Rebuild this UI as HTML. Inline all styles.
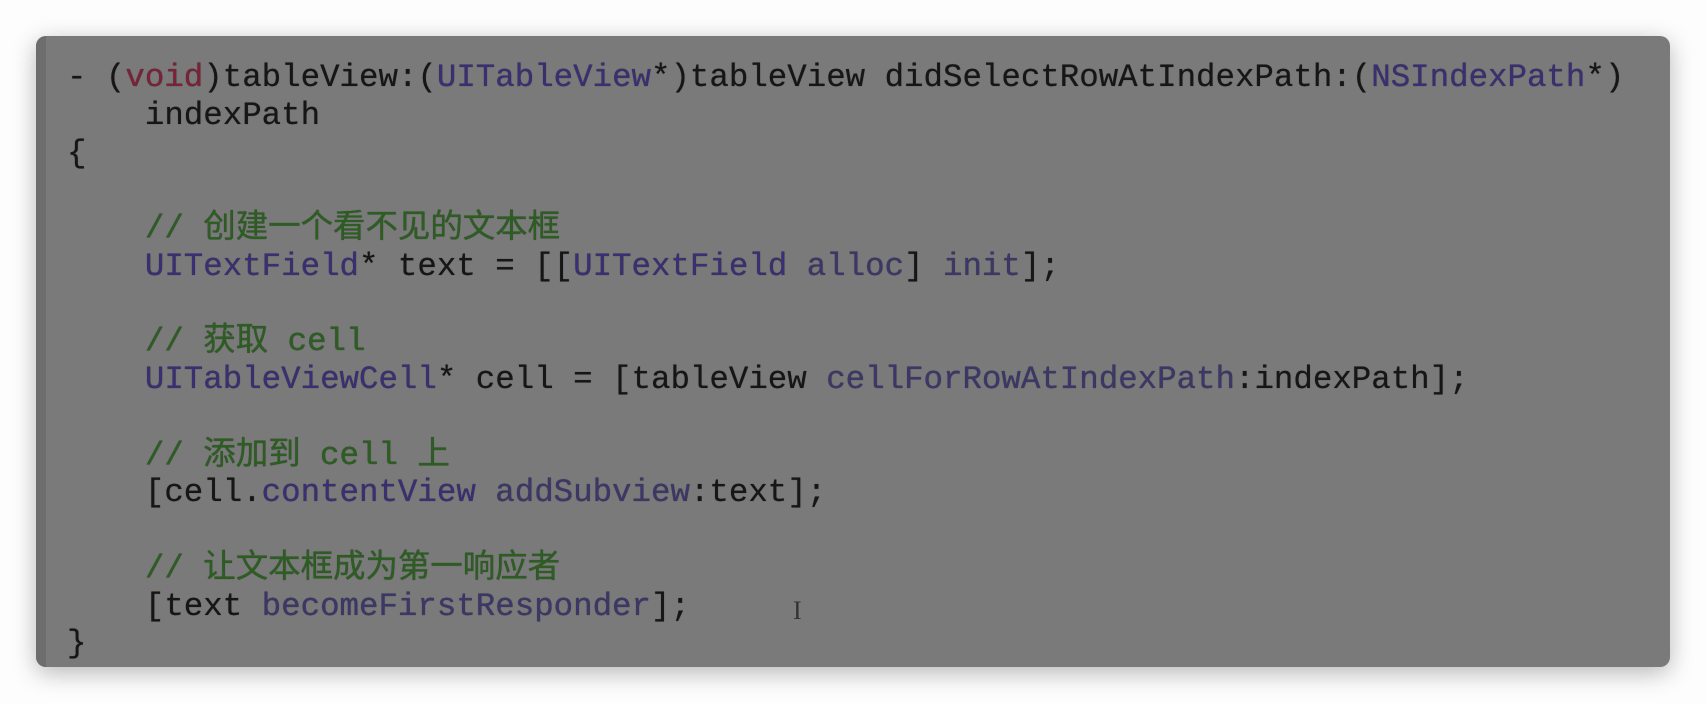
<!DOCTYPE html>
<html><head><meta charset="utf-8"><style>
body{margin:0;width:1706px;height:704px;background:#fdfdfd;overflow:hidden;position:relative}
.panel{position:absolute;left:36px;top:36px;width:1634px;height:631px;background:#797a79;border-radius:10px;box-shadow:0 6px 24px rgba(0,0,0,0.28);overflow:hidden}
.bar{position:absolute;left:0;top:0;width:10px;height:100%;background:#6c6d6c}
pre{position:absolute;left:31px;top:23px;margin:0;font-family:"Liberation Mono","Noto Sans CJK SC",monospace;font-size:32.45px;line-height:37.75px;color:#161616;text-shadow:0 0 0.6px #161616}
.k{color:#7a2238}.t{color:#3a2f72}.c{color:#2c5e22}.m{color:#3c3768}
.cur{position:absolute;left:793px;top:596px;font-family:"Liberation Serif",serif;font-size:26px;color:#333}
</style></head><body>
<div class="panel"><div class="bar"></div>
<pre>- (<span class="k">void</span>)tableView:(<span class="t">UITableView</span>*)tableView didSelectRowAtIndexPath:(<span class="t">NSIndexPath</span>*)
    indexPath
{

    <span class="c">// 创建一个看不见的文本框</span>
    <span class="t">UITextField</span>* text = [[<span class="t">UITextField</span> <span class="m">alloc</span>] <span class="m">init</span>];

    <span class="c">// 获取 cell</span>
    <span class="t">UITableViewCell</span>* cell = [tableView <span class="m">cellForRowAtIndexPath</span>:indexPath];

    <span class="c">// 添加到 cell 上</span>
    [cell.<span class="t">contentView</span> <span class="m">addSubview</span>:text];

    <span class="c">// 让文本框成为第一响应者</span>
    [text <span class="m">becomeFirstResponder</span>];
}</pre>
</div>
<div class="cur">I</div>
</body></html>
